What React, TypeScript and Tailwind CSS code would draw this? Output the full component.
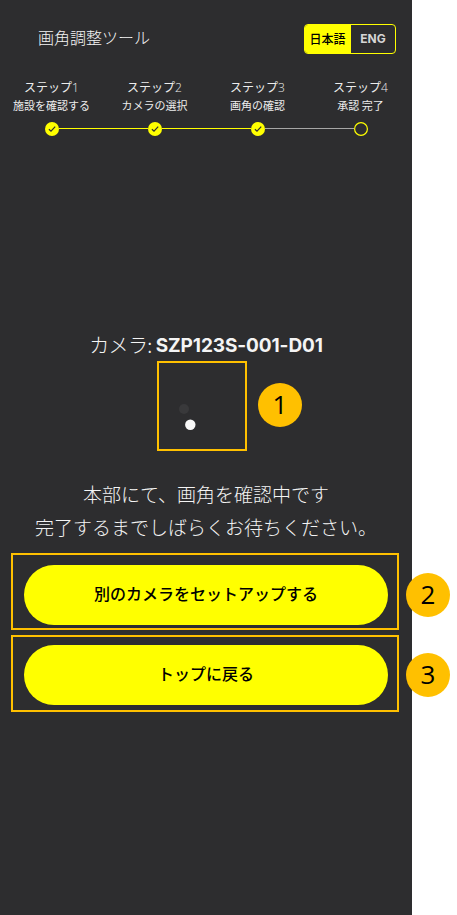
import React from 'react';

type Step = { title: string; number: number; label: string; done: boolean };

const steps: Step[] = [
  { title: 'ステップ', number: 1, label: '施設を確認する', done: true },
  { title: 'ステップ', number: 2, label: 'カメラの選択', done: true },
  { title: 'ステップ', number: 3, label: '画角の確認', done: true },
  { title: 'ステップ', number: 4, label: '承認 完了', done: false },
];

function StepMark({ done }: { done: boolean }) {
  return (
    <svg viewBox="0 0 14 14" className="block size-3.5 shrink-0" fill="none">
      <circle cx="7" cy="7" r={done ? 7 : 6.4} fill={done ? '#ffff00' : '#2d2d2f'} stroke="#ffff00" strokeWidth={done ? 0 : 1.2} />
      {done && <path d="M3.9 7.2 L6 9.1 L10.2 4.7" stroke="#2d2d2f" strokeWidth="1.2" />}
    </svg>
  );
}

function Connector({ kind }: { kind: 'none' | 'done' | 'pending' }) {
  const color = { none: 'bg-transparent', done: 'bg-[#ffff00]', pending: 'bg-[#a6a6a6]' }[kind];
  return <span className={`mt-1.5 h-px w-[45px] shrink-0 ${color}`} />;
}

function Stepper() {
  return (
    <ol className="flex h-[60px] w-[412px] text-center font-normal text-[#ececec]">
      {steps.map((step, i) => (
        <li key={step.number} className="flex w-[103px] shrink-0 flex-col">
          <span className="h-[18px] text-[12px] leading-[18px] whitespace-nowrap">
            {step.title}
            <span className="font-['Open_Sans',sans-serif] font-light">{step.number}</span>
          </span>
          <span className="h-[18px] text-[11px] leading-[18px] whitespace-nowrap">{step.label}</span>
          <div className="mt-2 flex h-3.5 items-start">
            <Connector kind={i === 0 ? 'none' : step.done ? 'done' : 'pending'} />
            <StepMark done={step.done} />
            <Connector kind={i === 3 ? 'none' : steps[i + 1].done ? 'done' : 'pending'} />
          </div>
        </li>
      ))}
    </ol>
  );
}

function Badge({ value, place }: { value: number; place: string }) {
  return (
    <span className={`absolute flex size-11 items-center justify-center rounded-full bg-[#ffc000] pb-0.5 font-['Open_Sans',sans-serif] text-[26px] leading-none font-normal text-black ${place}`}>
      {value}
    </span>
  );
}

function PillButton({ children }: { children: React.ReactNode }) {
  return (
    <button className="h-[60px] w-[364px] rounded-full bg-[#ffff00] pb-1 text-[16px] font-medium whitespace-nowrap text-black">
      {children}
    </button>
  );
}

export default function App() {
  return (
    <div className="relative h-[915px] w-[457px] overflow-hidden bg-white font-['Noto_Sans_CJK_JP',sans-serif] font-light">
      <main className="flex h-[915px] w-[412px] flex-col bg-[#2d2d2f] text-[#f4f4f4]">
        <header className="flex h-[78px] items-start justify-between pt-6 pr-4 pl-[38px]">
          <h1 className="-mt-px text-[16px] leading-7">画角調整ツール</h1>
          <div className="flex h-[30px] w-[92px] overflow-hidden rounded-[4px] border border-[#ffff00] text-[12px] leading-7">
            <button className="w-[46px] bg-[#ffff00] pr-px text-center font-medium text-black">日本語</button>
            <button className="w-11 text-center font-['Inter',sans-serif] font-bold text-[#d6d6d6]">ENG</button>
          </div>
        </header>

        <Stepper />

        <section className="mt-[191px] flex flex-col">
          <p className="flex h-8 justify-center gap-0.5 text-[20px] leading-8 whitespace-nowrap">
            <span className="tracking-[-0.6px]">カメラ:</span>
            <strong className="mt-px ml-0.5 font-['Inter',sans-serif] text-[19px] font-bold tracking-[-0.1px]">SZP123S-001-D01</strong>
          </p>
          <div className="ml-[157px] flex size-[90px] border-2 border-[#ffc000]">
            <svg viewBox="0 0 86 86" className="block size-[86px]">
              <circle cx="25" cy="46" r="5" fill="#39393b" />
              <circle cx="31.3" cy="61.8" r="5.2" fill="#f8f8f8" />
            </svg>
          </div>
        </section>

        <p className="mt-[26px] h-[67px] text-center text-[19px] leading-[33px] whitespace-nowrap">
          本部にて、画角を確認中です
          <br />
          完了するまでしばらくお待ちください。
        </p>

        <div className="mt-[9px] ml-[11px] flex w-[388px] flex-col gap-[5px]">
          <div className="flex h-[77px] border-2 border-[#ffc000] pt-[10px] pl-[11px]">
            <PillButton>別のカメラをセットアップする</PillButton>
          </div>
          <div className="flex h-[77px] border-2 border-[#ffc000] pt-2 pl-[11px]">
            <PillButton>トップに戻る</PillButton>
          </div>
        </div>
      </main>

      <Badge value={1} place="left-[258px] top-[383px]" />
      <Badge value={2} place="left-[406px] top-[573px]" />
      <Badge value={3} place="left-[406px] top-[653px]" />
    </div>
  );
}
